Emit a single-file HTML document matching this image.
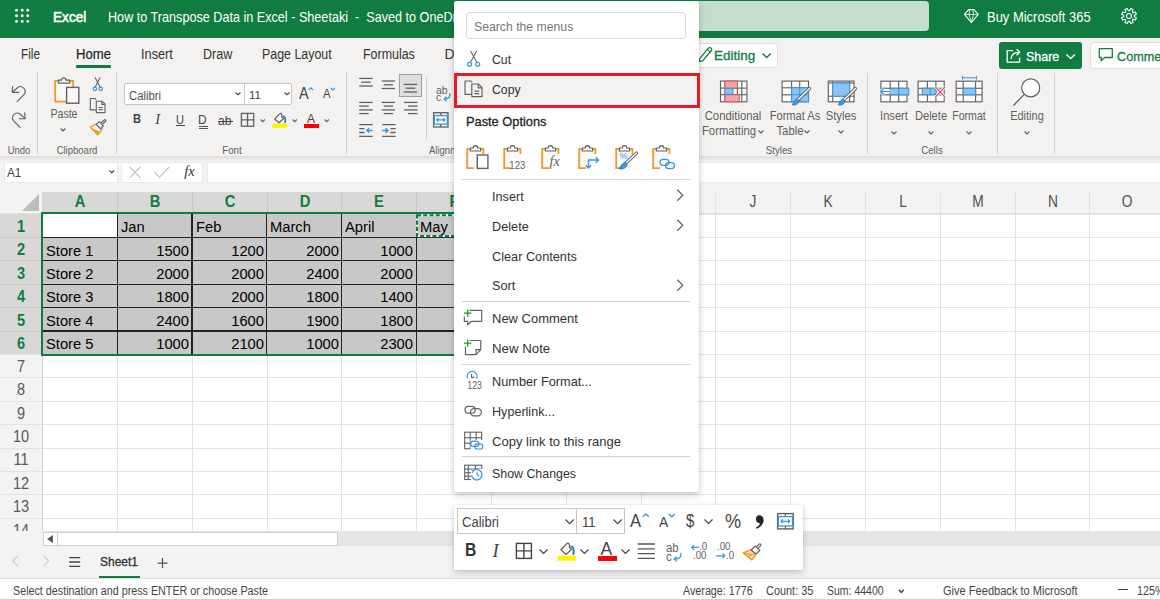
<!DOCTYPE html><html><head><meta charset="utf-8"><style>html,body{margin:0;padding:0;}body{width:1160px;height:600px;overflow:hidden;position:relative;background:#fff;font-family:'Liberation Sans', sans-serif;}</style></head><body><div style="position:absolute;left:0;top:0;width:1160px;height:600px;overflow:hidden"><div style="position:absolute;left:0.00px;top:0.00px;width:1160.00px;height:38.60px;background:#107C41"></div>
<div style="position:absolute;left:0.00px;top:38.00px;width:1160.00px;height:118.00px;background:#F3F2F1"></div>
<div style="position:absolute;left:0.00px;top:155.60px;width:1160.00px;height:6.40px;background:linear-gradient(#DDDDDD,#EFEFEF 70%,#F3F3F3)"></div>
<div style="position:absolute;left:0.00px;top:156.00px;width:1160.00px;height:36.00px;background:#F3F3F3;z-index:-1"></div>
<div style="position:absolute;left:4.00px;top:161.60px;width:113.60px;height:21.80px;background:#fff;border:1px solid #EAEAEA;box-sizing:border-box"></div>
<div style="position:absolute;left:121.20px;top:161.60px;width:81.60px;height:21.80px;background:#fff;border:1px solid #EAEAEA;box-sizing:border-box"></div>
<div style="position:absolute;left:207.40px;top:161.60px;width:960.00px;height:21.80px;background:#fff;border:1px solid #EAEAEA;box-sizing:border-box"></div>
<div style="position:absolute;left:0.00px;top:183.50px;width:1160.00px;height:29.50px;background:#F3F3F3"></div>
<div style="position:absolute;left:0.00px;top:213.00px;width:42.50px;height:318.00px;background:#F3F3F3"></div>
<div style="position:absolute;left:42.50px;top:213.00px;width:1117.50px;height:318.00px;background:#fff"></div>
<div style="position:absolute;left:117.00px;top:192.00px;width:1.00px;height:339.00px;background:#E3E3E3"></div>
<div style="position:absolute;left:191.80px;top:192.00px;width:1.00px;height:339.00px;background:#E3E3E3"></div>
<div style="position:absolute;left:266.60px;top:192.00px;width:1.00px;height:339.00px;background:#E3E3E3"></div>
<div style="position:absolute;left:341.40px;top:192.00px;width:1.00px;height:339.00px;background:#E3E3E3"></div>
<div style="position:absolute;left:416.20px;top:192.00px;width:1.00px;height:339.00px;background:#E3E3E3"></div>
<div style="position:absolute;left:491.00px;top:192.00px;width:1.00px;height:339.00px;background:#E3E3E3"></div>
<div style="position:absolute;left:565.80px;top:192.00px;width:1.00px;height:339.00px;background:#E3E3E3"></div>
<div style="position:absolute;left:640.60px;top:192.00px;width:1.00px;height:339.00px;background:#E3E3E3"></div>
<div style="position:absolute;left:715.40px;top:192.00px;width:1.00px;height:339.00px;background:#E3E3E3"></div>
<div style="position:absolute;left:790.20px;top:192.00px;width:1.00px;height:339.00px;background:#E3E3E3"></div>
<div style="position:absolute;left:865.00px;top:192.00px;width:1.00px;height:339.00px;background:#E3E3E3"></div>
<div style="position:absolute;left:939.80px;top:192.00px;width:1.00px;height:339.00px;background:#E3E3E3"></div>
<div style="position:absolute;left:1014.60px;top:192.00px;width:1.00px;height:339.00px;background:#E3E3E3"></div>
<div style="position:absolute;left:1089.40px;top:192.00px;width:1.00px;height:339.00px;background:#E3E3E3"></div>
<div style="position:absolute;left:1164.20px;top:192.00px;width:1.00px;height:339.00px;background:#E3E3E3"></div>
<div style="position:absolute;left:0.00px;top:213.50px;width:1160.00px;height:1.00px;background:#E3E3E3"></div>
<div style="position:absolute;left:0.00px;top:236.90px;width:1160.00px;height:1.00px;background:#E3E3E3"></div>
<div style="position:absolute;left:0.00px;top:260.30px;width:1160.00px;height:1.00px;background:#E3E3E3"></div>
<div style="position:absolute;left:0.00px;top:283.70px;width:1160.00px;height:1.00px;background:#E3E3E3"></div>
<div style="position:absolute;left:0.00px;top:307.10px;width:1160.00px;height:1.00px;background:#E3E3E3"></div>
<div style="position:absolute;left:0.00px;top:330.50px;width:1160.00px;height:1.00px;background:#E3E3E3"></div>
<div style="position:absolute;left:0.00px;top:353.90px;width:1160.00px;height:1.00px;background:#E3E3E3"></div>
<div style="position:absolute;left:0.00px;top:377.30px;width:1160.00px;height:1.00px;background:#E3E3E3"></div>
<div style="position:absolute;left:0.00px;top:400.70px;width:1160.00px;height:1.00px;background:#E3E3E3"></div>
<div style="position:absolute;left:0.00px;top:424.10px;width:1160.00px;height:1.00px;background:#E3E3E3"></div>
<div style="position:absolute;left:0.00px;top:447.50px;width:1160.00px;height:1.00px;background:#E3E3E3"></div>
<div style="position:absolute;left:0.00px;top:470.90px;width:1160.00px;height:1.00px;background:#E3E3E3"></div>
<div style="position:absolute;left:0.00px;top:494.30px;width:1160.00px;height:1.00px;background:#E3E3E3"></div>
<div style="position:absolute;left:0.00px;top:517.70px;width:1160.00px;height:1.00px;background:#E3E3E3"></div>
<div style="position:absolute;left:42.00px;top:192.00px;width:1.00px;height:339.00px;background:#D4D4D4"></div>
<div style="position:absolute;left:0.00px;top:212.80px;width:1160.00px;height:1.50px;background:#E0E0E0"></div>
<div style="position:absolute;left:42.70px;top:192.00px;width:448.80px;height:20.50px;background:#D9D8D6"></div>
<div style="position:absolute;left:0.00px;top:214.00px;width:42.00px;height:140.40px;background:#D9D8D6"></div>
<div style="position:absolute;left:117.00px;top:192.00px;width:1.00px;height:20.50px;background:#C8C8C8"></div>
<div style="position:absolute;left:191.80px;top:192.00px;width:1.00px;height:20.50px;background:#C8C8C8"></div>
<div style="position:absolute;left:266.60px;top:192.00px;width:1.00px;height:20.50px;background:#C8C8C8"></div>
<div style="position:absolute;left:341.40px;top:192.00px;width:1.00px;height:20.50px;background:#C8C8C8"></div>
<div style="position:absolute;left:416.20px;top:192.00px;width:1.00px;height:20.50px;background:#C8C8C8"></div>
<div style="position:absolute;left:0.00px;top:236.90px;width:42.00px;height:1.00px;background:#C8C8C8"></div>
<div style="position:absolute;left:0.00px;top:260.30px;width:42.00px;height:1.00px;background:#C8C8C8"></div>
<div style="position:absolute;left:0.00px;top:283.70px;width:42.00px;height:1.00px;background:#C8C8C8"></div>
<div style="position:absolute;left:0.00px;top:307.10px;width:42.00px;height:1.00px;background:#C8C8C8"></div>
<div style="position:absolute;left:0.00px;top:330.50px;width:42.00px;height:1.00px;background:#C8C8C8"></div>
<svg style="position:absolute;left:22.00px;top:194.00px;overflow:visible;" width="17" height="17" viewBox="0 0 17 17" fill="none"><path d="M0 17 L17 0 L17 17 Z" fill="#BDBDBD"/></svg>
<div style="position:absolute;left:-219.90px;width:600px;text-align:center;top:194.10px;font:700 16.0px/1 'Liberation Sans', sans-serif;color:#107C41;white-space:nowrap;transform:scaleX(0.92);transform-origin:center 0;">A</div>
<div style="position:absolute;left:-145.10px;width:600px;text-align:center;top:194.10px;font:700 16.0px/1 'Liberation Sans', sans-serif;color:#107C41;white-space:nowrap;transform:scaleX(0.92);transform-origin:center 0;">B</div>
<div style="position:absolute;left:-70.30px;width:600px;text-align:center;top:194.10px;font:700 16.0px/1 'Liberation Sans', sans-serif;color:#107C41;white-space:nowrap;transform:scaleX(0.92);transform-origin:center 0;">C</div>
<div style="position:absolute;left:4.50px;width:600px;text-align:center;top:194.10px;font:700 16.0px/1 'Liberation Sans', sans-serif;color:#107C41;white-space:nowrap;transform:scaleX(0.92);transform-origin:center 0;">D</div>
<div style="position:absolute;left:79.30px;width:600px;text-align:center;top:194.10px;font:700 16.0px/1 'Liberation Sans', sans-serif;color:#107C41;white-space:nowrap;transform:scaleX(0.92);transform-origin:center 0;">E</div>
<div style="position:absolute;left:154.10px;width:600px;text-align:center;top:194.10px;font:700 16.0px/1 'Liberation Sans', sans-serif;color:#107C41;white-space:nowrap;transform:scaleX(0.92);transform-origin:center 0;">F</div>
<div style="position:absolute;left:228.90px;width:600px;text-align:center;top:194.10px;font:400 16.0px/1 'Liberation Sans', sans-serif;color:#505050;white-space:nowrap;transform:scaleX(0.86);transform-origin:center 0;">G</div>
<div style="position:absolute;left:303.70px;width:600px;text-align:center;top:194.10px;font:400 16.0px/1 'Liberation Sans', sans-serif;color:#505050;white-space:nowrap;transform:scaleX(0.86);transform-origin:center 0;">H</div>
<div style="position:absolute;left:378.50px;width:600px;text-align:center;top:194.10px;font:400 16.0px/1 'Liberation Sans', sans-serif;color:#505050;white-space:nowrap;transform:scaleX(0.86);transform-origin:center 0;">I</div>
<div style="position:absolute;left:453.30px;width:600px;text-align:center;top:194.10px;font:400 16.0px/1 'Liberation Sans', sans-serif;color:#505050;white-space:nowrap;transform:scaleX(0.86);transform-origin:center 0;">J</div>
<div style="position:absolute;left:528.10px;width:600px;text-align:center;top:194.10px;font:400 16.0px/1 'Liberation Sans', sans-serif;color:#505050;white-space:nowrap;transform:scaleX(0.86);transform-origin:center 0;">K</div>
<div style="position:absolute;left:602.90px;width:600px;text-align:center;top:194.10px;font:400 16.0px/1 'Liberation Sans', sans-serif;color:#505050;white-space:nowrap;transform:scaleX(0.86);transform-origin:center 0;">L</div>
<div style="position:absolute;left:677.70px;width:600px;text-align:center;top:194.10px;font:400 16.0px/1 'Liberation Sans', sans-serif;color:#505050;white-space:nowrap;transform:scaleX(0.86);transform-origin:center 0;">M</div>
<div style="position:absolute;left:752.50px;width:600px;text-align:center;top:194.10px;font:400 16.0px/1 'Liberation Sans', sans-serif;color:#505050;white-space:nowrap;transform:scaleX(0.86);transform-origin:center 0;">N</div>
<div style="position:absolute;left:827.30px;width:600px;text-align:center;top:194.10px;font:400 16.0px/1 'Liberation Sans', sans-serif;color:#505050;white-space:nowrap;transform:scaleX(0.86);transform-origin:center 0;">O</div>
<div style="position:absolute;left:-279.40px;width:600px;text-align:center;top:218.03px;font:700 16.2px/1 'Liberation Sans', sans-serif;color:#107C41;white-space:nowrap;transform:scaleX(0.9);transform-origin:center 0;">1</div>
<div style="position:absolute;left:-279.40px;width:600px;text-align:center;top:241.43px;font:700 16.2px/1 'Liberation Sans', sans-serif;color:#107C41;white-space:nowrap;transform:scaleX(0.9);transform-origin:center 0;">2</div>
<div style="position:absolute;left:-279.40px;width:600px;text-align:center;top:264.83px;font:700 16.2px/1 'Liberation Sans', sans-serif;color:#107C41;white-space:nowrap;transform:scaleX(0.9);transform-origin:center 0;">3</div>
<div style="position:absolute;left:-279.40px;width:600px;text-align:center;top:288.23px;font:700 16.2px/1 'Liberation Sans', sans-serif;color:#107C41;white-space:nowrap;transform:scaleX(0.9);transform-origin:center 0;">4</div>
<div style="position:absolute;left:-279.40px;width:600px;text-align:center;top:311.63px;font:700 16.2px/1 'Liberation Sans', sans-serif;color:#107C41;white-space:nowrap;transform:scaleX(0.9);transform-origin:center 0;">5</div>
<div style="position:absolute;left:-279.40px;width:600px;text-align:center;top:335.03px;font:700 16.2px/1 'Liberation Sans', sans-serif;color:#107C41;white-space:nowrap;transform:scaleX(0.9);transform-origin:center 0;">6</div>
<div style="position:absolute;left:-279.50px;width:600px;text-align:center;top:357.83px;font:400 16.2px/1 'Liberation Sans', sans-serif;color:#595959;white-space:nowrap;transform:scaleX(0.9);transform-origin:center 0;">7</div>
<div style="position:absolute;left:-279.50px;width:600px;text-align:center;top:381.23px;font:400 16.2px/1 'Liberation Sans', sans-serif;color:#595959;white-space:nowrap;transform:scaleX(0.9);transform-origin:center 0;">8</div>
<div style="position:absolute;left:-279.50px;width:600px;text-align:center;top:404.63px;font:400 16.2px/1 'Liberation Sans', sans-serif;color:#595959;white-space:nowrap;transform:scaleX(0.9);transform-origin:center 0;">9</div>
<div style="position:absolute;left:-279.50px;width:600px;text-align:center;top:428.03px;font:400 16.2px/1 'Liberation Sans', sans-serif;color:#595959;white-space:nowrap;transform:scaleX(0.9);transform-origin:center 0;">10</div>
<div style="position:absolute;left:-279.50px;width:600px;text-align:center;top:451.43px;font:400 16.2px/1 'Liberation Sans', sans-serif;color:#595959;white-space:nowrap;transform:scaleX(0.9);transform-origin:center 0;">11</div>
<div style="position:absolute;left:-279.50px;width:600px;text-align:center;top:474.83px;font:400 16.2px/1 'Liberation Sans', sans-serif;color:#595959;white-space:nowrap;transform:scaleX(0.9);transform-origin:center 0;">12</div>
<div style="position:absolute;left:-279.50px;width:600px;text-align:center;top:498.23px;font:400 16.2px/1 'Liberation Sans', sans-serif;color:#595959;white-space:nowrap;transform:scaleX(0.9);transform-origin:center 0;">13</div>
<div style="position:absolute;left:-279.50px;width:600px;text-align:center;top:521.63px;font:400 16.2px/1 'Liberation Sans', sans-serif;color:#595959;white-space:nowrap;transform:scaleX(0.9);transform-origin:center 0;">14</div>
<div style="position:absolute;left:42.70px;top:214.00px;width:523.60px;height:140.40px;background:#C8C8C8"></div>
<div style="position:absolute;left:42.70px;top:214.00px;width:74.80px;height:23.40px;background:#fff"></div>
<div style="position:absolute;left:116.60px;top:214.00px;width:1.30px;height:140.40px;background:#222"></div>
<div style="position:absolute;left:191.40px;top:214.00px;width:1.30px;height:140.40px;background:#222"></div>
<div style="position:absolute;left:266.20px;top:214.00px;width:1.30px;height:140.40px;background:#222"></div>
<div style="position:absolute;left:341.00px;top:214.00px;width:1.30px;height:140.40px;background:#222"></div>
<div style="position:absolute;left:415.80px;top:214.00px;width:1.30px;height:140.40px;background:#222"></div>
<div style="position:absolute;left:490.60px;top:214.00px;width:1.30px;height:140.40px;background:#222"></div>
<div style="position:absolute;left:42.70px;top:236.75px;width:523.60px;height:1.30px;background:#222"></div>
<div style="position:absolute;left:42.70px;top:260.15px;width:523.60px;height:1.30px;background:#222"></div>
<div style="position:absolute;left:42.70px;top:283.55px;width:523.60px;height:1.30px;background:#222"></div>
<div style="position:absolute;left:42.70px;top:306.95px;width:523.60px;height:1.30px;background:#222"></div>
<div style="position:absolute;left:42.70px;top:330.35px;width:523.60px;height:1.30px;background:#222"></div>
<div style="position:absolute;left:41.00px;top:212.20px;width:533.60px;height:1.90px;background:#107C41"></div>
<div style="position:absolute;left:41.00px;top:212.20px;width:2.00px;height:143.20px;background:#107C41"></div>
<div style="position:absolute;left:41.00px;top:353.60px;width:533.60px;height:2.00px;background:#107C41"></div>
<svg style="position:absolute;left:415.70px;top:214.00px;overflow:visible;" width="60" height="23.4" viewBox="0 0 60 23.4" fill="none"><rect x="1" y="1.3" width="80" height="20.799999999999997" stroke="#fff" stroke-width="2"/><rect x="1" y="1.3" width="80" height="20.799999999999997" stroke="#107C41" stroke-width="2" stroke-dasharray="4.2 2"/></svg>
<div style="position:absolute;left:120.80px;top:219.12px;font:400 15.5px/1 'Liberation Sans', sans-serif;color:#000;white-space:nowrap;transform:scaleX(0.95);transform-origin:left 0;">Jan</div>
<div style="position:absolute;left:195.60px;top:219.12px;font:400 15.5px/1 'Liberation Sans', sans-serif;color:#000;white-space:nowrap;transform:scaleX(0.95);transform-origin:left 0;">Feb</div>
<div style="position:absolute;left:270.40px;top:219.12px;font:400 15.5px/1 'Liberation Sans', sans-serif;color:#000;white-space:nowrap;transform:scaleX(0.95);transform-origin:left 0;">March</div>
<div style="position:absolute;left:345.20px;top:219.12px;font:400 15.5px/1 'Liberation Sans', sans-serif;color:#000;white-space:nowrap;transform:scaleX(0.95);transform-origin:left 0;">April</div>
<div style="position:absolute;left:420.00px;top:219.12px;font:400 15.5px/1 'Liberation Sans', sans-serif;color:#000;white-space:nowrap;transform:scaleX(0.95);transform-origin:left 0;">May</div>
<div style="position:absolute;left:46.00px;top:242.53px;font:400 15.5px/1 'Liberation Sans', sans-serif;color:#000;white-space:nowrap;transform:scaleX(0.95);transform-origin:left 0;">Store 1</div>
<div style="position:absolute;left:-411.00px;width:600px;text-align:right;top:242.53px;font:400 15.5px/1 'Liberation Sans', sans-serif;color:#000;white-space:nowrap;transform:scaleX(0.95);transform-origin:right 0;">1500</div>
<div style="position:absolute;left:-336.20px;width:600px;text-align:right;top:242.53px;font:400 15.5px/1 'Liberation Sans', sans-serif;color:#000;white-space:nowrap;transform:scaleX(0.95);transform-origin:right 0;">1200</div>
<div style="position:absolute;left:-261.40px;width:600px;text-align:right;top:242.53px;font:400 15.5px/1 'Liberation Sans', sans-serif;color:#000;white-space:nowrap;transform:scaleX(0.95);transform-origin:right 0;">2000</div>
<div style="position:absolute;left:-186.60px;width:600px;text-align:right;top:242.53px;font:400 15.5px/1 'Liberation Sans', sans-serif;color:#000;white-space:nowrap;transform:scaleX(0.95);transform-origin:right 0;">1000</div>
<div style="position:absolute;left:46.00px;top:265.93px;font:400 15.5px/1 'Liberation Sans', sans-serif;color:#000;white-space:nowrap;transform:scaleX(0.95);transform-origin:left 0;">Store 2</div>
<div style="position:absolute;left:-411.00px;width:600px;text-align:right;top:265.93px;font:400 15.5px/1 'Liberation Sans', sans-serif;color:#000;white-space:nowrap;transform:scaleX(0.95);transform-origin:right 0;">2000</div>
<div style="position:absolute;left:-336.20px;width:600px;text-align:right;top:265.93px;font:400 15.5px/1 'Liberation Sans', sans-serif;color:#000;white-space:nowrap;transform:scaleX(0.95);transform-origin:right 0;">2000</div>
<div style="position:absolute;left:-261.40px;width:600px;text-align:right;top:265.93px;font:400 15.5px/1 'Liberation Sans', sans-serif;color:#000;white-space:nowrap;transform:scaleX(0.95);transform-origin:right 0;">2400</div>
<div style="position:absolute;left:-186.60px;width:600px;text-align:right;top:265.93px;font:400 15.5px/1 'Liberation Sans', sans-serif;color:#000;white-space:nowrap;transform:scaleX(0.95);transform-origin:right 0;">2000</div>
<div style="position:absolute;left:46.00px;top:289.32px;font:400 15.5px/1 'Liberation Sans', sans-serif;color:#000;white-space:nowrap;transform:scaleX(0.95);transform-origin:left 0;">Store 3</div>
<div style="position:absolute;left:-411.00px;width:600px;text-align:right;top:289.32px;font:400 15.5px/1 'Liberation Sans', sans-serif;color:#000;white-space:nowrap;transform:scaleX(0.95);transform-origin:right 0;">1800</div>
<div style="position:absolute;left:-336.20px;width:600px;text-align:right;top:289.32px;font:400 15.5px/1 'Liberation Sans', sans-serif;color:#000;white-space:nowrap;transform:scaleX(0.95);transform-origin:right 0;">2000</div>
<div style="position:absolute;left:-261.40px;width:600px;text-align:right;top:289.32px;font:400 15.5px/1 'Liberation Sans', sans-serif;color:#000;white-space:nowrap;transform:scaleX(0.95);transform-origin:right 0;">1800</div>
<div style="position:absolute;left:-186.60px;width:600px;text-align:right;top:289.32px;font:400 15.5px/1 'Liberation Sans', sans-serif;color:#000;white-space:nowrap;transform:scaleX(0.95);transform-origin:right 0;">1400</div>
<div style="position:absolute;left:46.00px;top:312.73px;font:400 15.5px/1 'Liberation Sans', sans-serif;color:#000;white-space:nowrap;transform:scaleX(0.95);transform-origin:left 0;">Store 4</div>
<div style="position:absolute;left:-411.00px;width:600px;text-align:right;top:312.73px;font:400 15.5px/1 'Liberation Sans', sans-serif;color:#000;white-space:nowrap;transform:scaleX(0.95);transform-origin:right 0;">2400</div>
<div style="position:absolute;left:-336.20px;width:600px;text-align:right;top:312.73px;font:400 15.5px/1 'Liberation Sans', sans-serif;color:#000;white-space:nowrap;transform:scaleX(0.95);transform-origin:right 0;">1600</div>
<div style="position:absolute;left:-261.40px;width:600px;text-align:right;top:312.73px;font:400 15.5px/1 'Liberation Sans', sans-serif;color:#000;white-space:nowrap;transform:scaleX(0.95);transform-origin:right 0;">1900</div>
<div style="position:absolute;left:-186.60px;width:600px;text-align:right;top:312.73px;font:400 15.5px/1 'Liberation Sans', sans-serif;color:#000;white-space:nowrap;transform:scaleX(0.95);transform-origin:right 0;">1800</div>
<div style="position:absolute;left:46.00px;top:336.12px;font:400 15.5px/1 'Liberation Sans', sans-serif;color:#000;white-space:nowrap;transform:scaleX(0.95);transform-origin:left 0;">Store 5</div>
<div style="position:absolute;left:-411.00px;width:600px;text-align:right;top:336.12px;font:400 15.5px/1 'Liberation Sans', sans-serif;color:#000;white-space:nowrap;transform:scaleX(0.95);transform-origin:right 0;">1000</div>
<div style="position:absolute;left:-336.20px;width:600px;text-align:right;top:336.12px;font:400 15.5px/1 'Liberation Sans', sans-serif;color:#000;white-space:nowrap;transform:scaleX(0.95);transform-origin:right 0;">2100</div>
<div style="position:absolute;left:-261.40px;width:600px;text-align:right;top:336.12px;font:400 15.5px/1 'Liberation Sans', sans-serif;color:#000;white-space:nowrap;transform:scaleX(0.95);transform-origin:right 0;">1000</div>
<div style="position:absolute;left:-186.60px;width:600px;text-align:right;top:336.12px;font:400 15.5px/1 'Liberation Sans', sans-serif;color:#000;white-space:nowrap;transform:scaleX(0.95);transform-origin:right 0;">2300</div>
<div style="position:absolute;left:0.00px;top:531.00px;width:1160.00px;height:15.00px;background:#F3F3F3"></div>
<div style="position:absolute;left:43.00px;top:531.00px;width:1117.00px;height:15.00px;background:#E6E6E6"></div>
<div style="position:absolute;left:43.00px;top:531.50px;width:295.00px;height:14.00px;background:#fff;border:1px solid #D0D0D0;box-sizing:border-box"></div>
<div style="position:absolute;left:43.00px;top:531.50px;width:14.50px;height:14.00px;background:#fff;border:1px solid #D0D0D0;box-sizing:border-box"></div>
<svg style="position:absolute;left:47.00px;top:535.00px;overflow:visible;" width="6" height="8" viewBox="0 0 6 8" fill="none"><path d="M6 0 L0 4 L6 8 Z" fill="#555"/></svg>
<div style="position:absolute;left:0.00px;top:546.00px;width:1160.00px;height:32.50px;background:#F3F3F3"></div>
<svg style="position:absolute;left:14.80px;top:9.00px;overflow:visible;" width="15" height="15" viewBox="0 0 15 15" fill="none"><circle cx="1.55" cy="1.2" r="1.45" fill="#fff"/><circle cx="1.55" cy="6.8" r="1.45" fill="#fff"/><circle cx="1.55" cy="12.399999999999999" r="1.45" fill="#fff"/><circle cx="7.1499999999999995" cy="1.2" r="1.45" fill="#fff"/><circle cx="7.1499999999999995" cy="6.8" r="1.45" fill="#fff"/><circle cx="7.1499999999999995" cy="12.399999999999999" r="1.45" fill="#fff"/><circle cx="12.75" cy="1.2" r="1.45" fill="#fff"/><circle cx="12.75" cy="6.8" r="1.45" fill="#fff"/><circle cx="12.75" cy="12.399999999999999" r="1.45" fill="#fff"/></svg>
<div style="position:absolute;left:52.50px;top:9.92px;font:400 14.8px/1 'Liberation Sans', sans-serif;color:#fff;white-space:nowrap;transform:scaleX(0.92);transform-origin:left 0;-webkit-text-stroke:0.55px #fff">Excel</div>
<div style="position:absolute;left:108.30px;top:10.43px;font:400 14.2px/1 'Liberation Sans', sans-serif;color:#fff;white-space:nowrap;transform:scaleX(0.89);transform-origin:left 0;">How to Transpose Data in Excel - Sheetaki &nbsp;-&nbsp; Saved to OneDrive</div>
<div style="position:absolute;left:470.00px;top:1.25px;width:459.30px;height:29.50px;background:#C5DCCE;border-radius:4px"></div>
<svg style="position:absolute;left:964.40px;top:9.00px;overflow:visible;" width="15" height="15" viewBox="0 0 15 15" fill="none"><path d="M4.6 0.6 H10 L14.2 5.4 L7.3 13.6 L0.5 5.4 Z" stroke="#fff" stroke-width="1.05" stroke-linejoin="round"/><path d="M0.5 5.4 H14.2 M5.6 0.6 L5.1 5.4 L7.3 13.6 L9.5 5.4 L9 0.6" stroke="#fff" stroke-opacity="0.85" stroke-width="0.9" stroke-linejoin="round"/></svg>
<div style="position:absolute;left:987.00px;top:10.13px;font:400 14.2px/1 'Liberation Sans', sans-serif;color:#fff;white-space:nowrap;transform:scaleX(0.913);transform-origin:left 0;">Buy Microsoft 365</div>
<svg style="position:absolute;left:1121.40px;top:8.10px;overflow:visible;" width="16" height="16" viewBox="0 0 16 16" fill="none"><path d="M15.41 9.68 L14.43 12.05 L12.18 11.26 L11.26 12.18 L12.05 14.43 L9.68 15.41 L8.65 13.26 L7.35 13.26 L6.32 15.41 L3.95 14.43 L4.74 12.18 L3.82 11.26 L1.57 12.05 L0.59 9.68 L2.74 8.65 L2.74 7.35 L0.59 6.32 L1.57 3.95 L3.82 4.74 L4.74 3.82 L3.95 1.57 L6.32 0.59 L7.35 2.74 L8.65 2.74 L9.68 0.59 L12.05 1.57 L11.26 3.82 L12.18 4.74 L14.43 3.95 L15.41 6.32 L13.26 7.35 L13.26 8.65 Z" stroke="#fff" stroke-width="1.1" stroke-linejoin="round"/><circle cx="8" cy="8" r="2.5" stroke="#fff" stroke-width="1.1"/></svg>
<div style="position:absolute;left:21.00px;top:46.70px;font:400 14.0px/1 'Liberation Sans', sans-serif;color:#323130;white-space:nowrap;transform:scaleX(0.8422919206472349);transform-origin:left 0;">File</div>
<div style="position:absolute;left:76.00px;top:46.70px;font:400 14.0px/1 'Liberation Sans', sans-serif;color:#201F1E;white-space:nowrap;transform:scaleX(0.9372620233143929);transform-origin:left 0;-webkit-text-stroke:0.2px #201F1E">Home</div>
<div style="position:absolute;left:140.80px;top:46.70px;font:400 14.0px/1 'Liberation Sans', sans-serif;color:#323130;white-space:nowrap;transform:scaleX(0.9111438389788905);transform-origin:left 0;">Insert</div>
<div style="position:absolute;left:202.50px;top:46.70px;font:400 14.0px/1 'Liberation Sans', sans-serif;color:#323130;white-space:nowrap;transform:scaleX(0.8968987353880886);transform-origin:left 0;">Draw</div>
<div style="position:absolute;left:262.30px;top:46.70px;font:400 14.0px/1 'Liberation Sans', sans-serif;color:#323130;white-space:nowrap;transform:scaleX(0.8866062981483985);transform-origin:left 0;">Page Layout</div>
<div style="position:absolute;left:362.70px;top:46.70px;font:400 14.0px/1 'Liberation Sans', sans-serif;color:#323130;white-space:nowrap;transform:scaleX(0.8878890138732658);transform-origin:left 0;">Formulas</div>
<div style="position:absolute;left:444.40px;top:46.70px;font:400 14.0px/1 'Liberation Sans', sans-serif;color:#323130;white-space:nowrap;transform:scaleX(1.0);transform-origin:left 0;">Data</div>
<div style="position:absolute;left:76.00px;top:65.00px;width:35.00px;height:3.00px;background:#107C41;border-radius:1px"></div>
<div style="position:absolute;left:37.00px;top:72.00px;width:1.00px;height:82.00px;background:#D2D0CE"></div>
<div style="position:absolute;left:115.50px;top:72.00px;width:1.00px;height:82.00px;background:#D2D0CE"></div>
<div style="position:absolute;left:346.20px;top:72.00px;width:1.00px;height:82.00px;background:#D2D0CE"></div>
<div style="position:absolute;left:425.50px;top:76.70px;width:1.00px;height:63.80px;background:#D2D0CE"></div>
<div style="position:absolute;left:867.00px;top:72.50px;width:1.00px;height:81.30px;background:#D2D0CE"></div>
<div style="position:absolute;left:996.50px;top:72.50px;width:1.00px;height:81.30px;background:#D2D0CE"></div>
<div style="position:absolute;left:1053.50px;top:72.50px;width:1.00px;height:81.30px;background:#D2D0CE"></div>
<svg style="position:absolute;left:5.00px;top:75.00px;overflow:visible;" width="30" height="60" viewBox="0 0 30 60" fill="none"><g stroke="#616161" stroke-width="1.15" stroke-linecap="round" stroke-linejoin="round"><path d="M7.6 11.6 L7.2 17.4 L13.8 17.4"/><path d="M7.5 17 L12.5 12.7 A4.7 4.7 0 0 1 19.1 19.3 L12.2 26.6"/><path d="M19.7 37.8 L20.1 43.7 L14.3 43.7"/><path d="M20 43.4 L15.2 39.2 A4.7 4.7 0 0 0 8.6 45.8 L15.1 52.4"/></g></svg>
<div style="position:absolute;left:-281.00px;width:600px;text-align:center;top:145.19px;font:400 10.6px/1 'Liberation Sans', sans-serif;color:#605E5C;white-space:nowrap;transform:scaleX(0.892);transform-origin:center 0;">Undo</div>
<svg style="position:absolute;left:50.00px;top:74.00px;overflow:visible;" width="32" height="32" viewBox="0 0 32 32" fill="none"><rect x="5.2" y="6.8" width="18" height="20.8" fill="#FAF9F8" stroke="#ED9A2B" stroke-width="1.8"/><path d="M8.3 9.2 V6.2 H11.5 C11.5 3.2, 16 3.2, 16 6.2 H19.8 V9.2 Z" fill="#F3F2F1" stroke="#616161" stroke-width="1.2" stroke-linejoin="round"/><rect x="16.6" y="13.4" width="12.2" height="15.8" fill="#FAF9F8" stroke="#616161" stroke-width="1.4"/></svg>
<div style="position:absolute;left:-235.80px;width:600px;text-align:center;top:107.08px;font:400 13.2px/1 'Liberation Sans', sans-serif;color:#605E5C;white-space:nowrap;transform:scaleX(0.8);transform-origin:center 0;">Paste</div>
<svg style="position:absolute;left:60.40px;top:127.85px;overflow:visible;" width="6" height="3.5" viewBox="0 0 6 3.5" fill="none"><path d="M0.5 0.5 L3.0 3.0 L5.5 0.5" stroke="#616161" stroke-width="1.2"/></svg>
<svg style="position:absolute;left:90.00px;top:75.00px;overflow:visible;" width="16" height="16" viewBox="0 0 16 16" fill="none"><path d="M5 2.2 L10.2 12.3 M10.3 2.2 L5.1 12.3" stroke="#616161" stroke-width="1.05"/><circle cx="4.9" cy="13.8" r="1.75" stroke="#3A96DD" stroke-width="1.2" fill="#F3F2F1"/><circle cx="10.7" cy="13.8" r="1.75" stroke="#3A96DD" stroke-width="1.2" fill="#F3F2F1"/></svg>
<svg style="position:absolute;left:88.00px;top:96.00px;overflow:visible;" width="20" height="20" viewBox="0 0 20 20" fill="none"><g stroke="#616161" stroke-width="1.1" stroke-linejoin="round"><path d="M7.9 13.9 H2.3 V2.5 H7.2 L8.2 3.7"/><path d="M8.3 5.2 H14 L17 8.2 V16.6 H8.3 Z" fill="#F3F2F1"/><path d="M13.8 5.2 V8.4 H17"/><path d="M10.6 11.5 H14.7 M10.6 13.6 H14.7"/></g></svg>
<svg style="position:absolute;left:88.00px;top:118.00px;overflow:visible;" width="20" height="20" viewBox="0 0 20 20" fill="none"><path d="M2.3 9 L9.8 16.9 L14.2 11.2 L8.4 5.8 Z" fill="#FDF6EE" stroke="#ED9A2B" stroke-width="1.4" stroke-linejoin="round"/><path d="M3.2 9.9 L9.8 16.2 L11.6 13.6 Z" fill="#ED9A2B"/><path d="M8.3 6.6 L11.2 3.7 L15.4 7.9 L12.6 10.8 Z" fill="#F3F2F1" stroke="#616161" stroke-width="1.2" stroke-linejoin="round"/><path d="M12.8 5.3 L16.3 1.9 C17 1.3, 18.3 2.4, 17.7 3.2 L14.1 6.6" fill="#F3F2F1" stroke="#616161" stroke-width="1.2" stroke-linejoin="round"/></svg>
<div style="position:absolute;left:-222.70px;width:600px;text-align:center;top:145.19px;font:400 10.6px/1 'Liberation Sans', sans-serif;color:#605E5C;white-space:nowrap;transform:scaleX(0.898);transform-origin:center 0;">Clipboard</div>
<div style="position:absolute;left:124.30px;top:82.90px;width:167.90px;height:22.20px;background:#fff;border:1px solid #C8C6C4;border-radius:2px;box-sizing:border-box"></div>
<div style="position:absolute;left:243.60px;top:82.90px;width:1.00px;height:22.20px;background:#C8C6C4"></div>
<div style="position:absolute;left:129.30px;top:89.50px;font:400 12.0px/1 'Liberation Sans', sans-serif;color:#505050;white-space:nowrap;transform:scaleX(0.94);transform-origin:left 0;">Calibri</div>
<svg style="position:absolute;left:235.30px;top:92.10px;overflow:visible;" width="6" height="3.2" viewBox="0 0 6 3.2" fill="none"><path d="M0.5 0.5 L3.0 2.7 L5.5 0.5" stroke="#444" stroke-width="1.2"/></svg>
<div style="position:absolute;left:249.00px;top:90.12px;font:400 11.5px/1 'Liberation Sans', sans-serif;color:#444;white-space:nowrap;">11</div>
<svg style="position:absolute;left:283.90px;top:92.10px;overflow:visible;" width="6" height="3.2" viewBox="0 0 6 3.2" fill="none"><path d="M0.5 0.5 L3.0 2.7 L5.5 0.5" stroke="#444" stroke-width="1.2"/></svg>
<div style="position:absolute;left:298.60px;top:84.93px;font:400 16.2px/1 'Liberation Sans', sans-serif;color:#444;white-space:nowrap;transform:scaleX(0.9);transform-origin:left 0;">A</div>
<svg style="position:absolute;left:307.50px;top:87.00px;overflow:visible;" width="6" height="4" viewBox="0 0 6 4" fill="none"><path d="M0.6 3.2 L2.8 0.9 L5 3.2" stroke="#3A96DD" stroke-width="1.2"/></svg>
<div style="position:absolute;left:323.00px;top:88.49px;font:400 12.6px/1 'Liberation Sans', sans-serif;color:#444;white-space:nowrap;transform:scaleX(0.9);transform-origin:left 0;">A</div>
<svg style="position:absolute;left:330.40px;top:87.00px;overflow:visible;" width="6" height="4" viewBox="0 0 6 4" fill="none"><path d="M0.6 0.9 L2.8 3.2 L5 0.9" stroke="#3A96DD" stroke-width="1.2"/></svg>
<div style="position:absolute;left:132.60px;top:113.19px;font:700 12.6px/1 'Liberation Sans', sans-serif;color:#444;white-space:nowrap;transform:scaleX(0.88);transform-origin:left 0;">B</div>
<div style="position:absolute;left:155.20px;top:111.67px;font:400 14.5px/1 'Liberation Sans', sans-serif;color:#444;white-space:nowrap;font-family:'Liberation Serif',serif;font-style:italic">I</div>
<div style="position:absolute;left:176.00px;top:113.69px;font:400 12.6px/1 'Liberation Sans', sans-serif;color:#444;white-space:nowrap;transform:scaleX(0.88);transform-origin:left 0;">U</div>
<div style="position:absolute;left:176.20px;top:125.00px;width:8.50px;height:1.10px;background:#444"></div>
<div style="position:absolute;left:198.40px;top:113.69px;font:400 12.6px/1 'Liberation Sans', sans-serif;color:#444;white-space:nowrap;transform:scaleX(0.95);transform-origin:left 0;">D</div>
<div style="position:absolute;left:198.60px;top:125.60px;width:9.40px;height:0.85px;background:#555"></div>
<div style="position:absolute;left:198.60px;top:127.50px;width:9.40px;height:0.85px;background:#555"></div>
<div style="position:absolute;left:218.20px;top:113.74px;font:400 13.6px/1 'Liberation Sans', sans-serif;color:#444;white-space:nowrap;transform:scaleX(0.88);transform-origin:left 0;">ab</div>
<div style="position:absolute;left:217.80px;top:121.10px;width:15.50px;height:1.00px;background:#444"></div>
<svg style="position:absolute;left:240.00px;top:112.00px;overflow:visible;" width="16" height="16" viewBox="0 0 16 16" fill="none"><rect x="1.4" y="1.4" width="12.3" height="12.8" stroke="#616161" stroke-width="1.3"/><path d="M7.55 1.4 V14.2 M1.4 7.8 H13.7" stroke="#616161" stroke-width="1.3"/></svg>
<svg style="position:absolute;left:259.90px;top:118.80px;overflow:visible;" width="5.4" height="3.2" viewBox="0 0 5.4 3.2" fill="none"><path d="M0.5 0.5 L2.7 2.7 L4.9 0.5" stroke="#616161" stroke-width="1.1"/></svg>
<svg style="position:absolute;left:271.00px;top:111.00px;overflow:visible;" width="18" height="18" viewBox="0 0 18 18" fill="none"><path d="M3.8 8 L8.5 3.1 C9.1 2.2, 10.3 2.2, 10.6 3.3 L10.9 6.3 L12.6 7.5 L8 11.8 Z" stroke="#616161" stroke-width="1.2" stroke-linejoin="round" fill="#fff"/><path d="M12.3 5.4 C14 5.2, 14.6 7.5, 14.2 11.4" stroke="#2B79C2" stroke-width="1.7" stroke-linecap="round"/><rect x="1.2" y="12.8" width="15.1" height="4.1" fill="#FFF200"/></svg>
<svg style="position:absolute;left:291.80px;top:118.80px;overflow:visible;" width="5.4" height="3.2" viewBox="0 0 5.4 3.2" fill="none"><path d="M0.5 0.5 L2.7 2.7 L4.9 0.5" stroke="#616161" stroke-width="1.1"/></svg>
<div style="position:absolute;left:307.00px;top:112.34px;font:400 13.6px/1 'Liberation Sans', sans-serif;color:#444;white-space:nowrap;transform:scaleX(0.88);transform-origin:left 0;">A</div>
<div style="position:absolute;left:304.00px;top:123.80px;width:15.10px;height:4.10px;background:#F00"></div>
<svg style="position:absolute;left:323.50px;top:118.80px;overflow:visible;" width="5.4" height="3.2" viewBox="0 0 5.4 3.2" fill="none"><path d="M0.5 0.5 L2.7 2.7 L4.9 0.5" stroke="#616161" stroke-width="1.1"/></svg>
<div style="position:absolute;left:-68.00px;width:600px;text-align:center;top:145.19px;font:400 10.6px/1 'Liberation Sans', sans-serif;color:#605E5C;white-space:nowrap;transform:scaleX(0.913);transform-origin:center 0;">Font</div>
<svg style="position:absolute;left:0.00px;top:0.00px;overflow:visible;" width="1" height="1" viewBox="0 0 1 1" fill="none"><path d="M359.20 78.40 H372.70" stroke="#616161" stroke-width="1.3"/><path d="M361.20 82.20 H370.70" stroke="#616161" stroke-width="1.3"/><path d="M359.20 86.00 H372.70" stroke="#616161" stroke-width="1.3"/></svg>
<svg style="position:absolute;left:0.00px;top:0.00px;overflow:visible;" width="1" height="1" viewBox="0 0 1 1" fill="none"><path d="M381.70 81.00 H395.00" stroke="#616161" stroke-width="1.3"/><path d="M383.70 84.80 H393.00" stroke="#616161" stroke-width="1.3"/><path d="M381.70 88.50 H395.00" stroke="#616161" stroke-width="1.3"/></svg>
<div style="position:absolute;left:399.20px;top:74.20px;width:22.50px;height:22.50px;background:#E1DFDD;border:1px solid #A19F9D;box-sizing:border-box"></div>
<svg style="position:absolute;left:0.00px;top:0.00px;overflow:visible;" width="1" height="1" viewBox="0 0 1 1" fill="none"><path d="M403.70 84.40 H417.20" stroke="#616161" stroke-width="1.3"/><path d="M405.70 88.20 H415.20" stroke="#616161" stroke-width="1.3"/><path d="M403.70 92.00 H417.20" stroke="#616161" stroke-width="1.3"/></svg>
<svg style="position:absolute;left:0.00px;top:0.00px;overflow:visible;" width="1" height="1" viewBox="0 0 1 1" fill="none"><path d="M359.20 102.40 H372.70" stroke="#616161" stroke-width="1.3"/><path d="M359.20 106.10 H368.70" stroke="#616161" stroke-width="1.3"/><path d="M359.20 109.90 H372.70" stroke="#616161" stroke-width="1.3"/><path d="M359.20 113.60 H368.70" stroke="#616161" stroke-width="1.3"/></svg>
<svg style="position:absolute;left:0.00px;top:0.00px;overflow:visible;" width="1" height="1" viewBox="0 0 1 1" fill="none"><path d="M381.70 102.40 H395.00" stroke="#616161" stroke-width="1.3"/><path d="M383.70 106.10 H393.00" stroke="#616161" stroke-width="1.3"/><path d="M381.70 109.90 H395.00" stroke="#616161" stroke-width="1.3"/><path d="M383.70 113.60 H393.00" stroke="#616161" stroke-width="1.3"/></svg>
<svg style="position:absolute;left:0.00px;top:0.00px;overflow:visible;" width="1" height="1" viewBox="0 0 1 1" fill="none"><path d="M404.00 102.40 H417.50" stroke="#616161" stroke-width="1.3"/><path d="M408.00 106.10 H417.50" stroke="#616161" stroke-width="1.3"/><path d="M404.00 109.90 H417.50" stroke="#616161" stroke-width="1.3"/><path d="M408.00 113.60 H417.50" stroke="#616161" stroke-width="1.3"/></svg>
<svg style="position:absolute;left:358.00px;top:123.00px;overflow:visible;" width="18" height="16" viewBox="0 0 18 16" fill="none"><g stroke="#616161" stroke-width="1.3"><path d="M1.2 1.6 H14.7 M1.2 13.4 H14.7 M1.2 5.6 H6.5 M1.2 9.5 H6.5"/></g><path d="M14.5 7.5 H8.8 M11.2 5.2 L8.8 7.5 L11.2 9.8" stroke="#3A96DD" stroke-width="1.4"/></svg>
<svg style="position:absolute;left:380.50px;top:123.00px;overflow:visible;" width="18" height="16" viewBox="0 0 18 16" fill="none"><g stroke="#616161" stroke-width="1.3"><path d="M1.2 1.6 H14.7 M1.2 13.4 H14.7 M9.4 5.6 H14.7 M9.4 9.5 H14.7"/></g><path d="M1.2 7.5 H7 M4.6 5.2 L7 7.5 L4.6 9.8" stroke="#3A96DD" stroke-width="1.4"/></svg>
<div style="position:absolute;left:436.00px;top:84.85px;font:400 11.0px/1 'Liberation Sans', sans-serif;color:#616161;white-space:nowrap;transform:scaleX(0.95);transform-origin:left 0;">ab</div>
<div style="position:absolute;left:436.00px;top:91.85px;font:400 11.0px/1 'Liberation Sans', sans-serif;color:#616161;white-space:nowrap;transform:scaleX(0.95);transform-origin:left 0;">c</div>
<svg style="position:absolute;left:442.00px;top:92.00px;overflow:visible;" width="10" height="10" viewBox="0 0 10 10" fill="none"><path d="M7.8 1 C8.5 5, 7 7, 2.2 7 M4.5 4.6 L2.2 7 L4.5 9.2" stroke="#3A96DD" stroke-width="1.3"/></svg>
<svg style="position:absolute;left:432.00px;top:111.00px;overflow:visible;" width="18" height="18" viewBox="0 0 18 18" fill="none"><rect x="1.6" y="1.7" width="14.4" height="14.3" stroke="#616161" stroke-width="1.3"/><rect x="2.3" y="4.6" width="13" height="8.5" fill="#fff" stroke="#3A96DD" stroke-width="1.3"/><path d="M8.8 1.7 V4.6 M8.8 13.1 V16" stroke="#616161" stroke-width="1.2"/><path d="M4.6 8.9 H13 M6.4 7.1 L4.6 8.9 L6.4 10.7 M11.2 7.1 L13 8.9 L11.2 10.7" stroke="#3A96DD" stroke-width="1.2"/></svg>
<div style="position:absolute;left:429.00px;top:145.19px;font:400 10.6px/1 'Liberation Sans', sans-serif;color:#605E5C;white-space:nowrap;transform:scaleX(0.898);transform-origin:left 0;">Alignment</div>
<div style="position:absolute;left:600.00px;top:42.60px;width:178.30px;height:25.80px;background:#fff;border:1px solid #E1DFDD;border-radius:4px;box-sizing:border-box"></div>
<svg style="position:absolute;left:697.00px;top:45.00px;overflow:visible;" width="16" height="18" viewBox="0 0 16 18" fill="none"><path d="M2.2 16.6 L2.9 13.4 L11.2 3.3 C12 2.3, 13.5 2.4, 14.2 3.2 C14.9 4, 14.8 5.2, 14.1 6 L5.6 15.9 Z M10.3 4.4 L13.2 6.9" stroke="#107C41" stroke-width="1.25" stroke-linejoin="round"/></svg>
<div style="position:absolute;left:714.00px;top:49.44px;font:400 13.6px/1 'Liberation Sans', sans-serif;color:#107C41;white-space:nowrap;transform:scaleX(0.99);transform-origin:left 0;-webkit-text-stroke:0.3px #107C41">Editing</div>
<svg style="position:absolute;left:761.65px;top:52.80px;overflow:visible;" width="9.3" height="5" viewBox="0 0 9.3 5" fill="none"><path d="M0.5 0.5 L4.65 4.5 L8.8 0.5" stroke="#107C41" stroke-width="1.4"/></svg>
<div style="position:absolute;left:999.00px;top:42.20px;width:83.00px;height:26.40px;background:#107C41;border-radius:3px"></div>
<svg style="position:absolute;left:1004.00px;top:45.00px;overflow:visible;" width="20" height="20" viewBox="0 0 20 20" fill="none"><path d="M9 5.6 H3.2 V17.2 H15.6 V12.6" stroke="#fff" stroke-width="1.3" stroke-linejoin="round"/><path d="M7 14 C7.5 9, 10.5 7.3, 15 7.3 M12.6 4.3 L15.8 7.3 L12.6 10.3" stroke="#fff" stroke-width="1.3" stroke-linejoin="round"/></svg>
<div style="position:absolute;left:1025.50px;top:49.74px;font:400 13.6px/1 'Liberation Sans', sans-serif;color:#fff;white-space:nowrap;transform:scaleX(0.915);transform-origin:left 0;-webkit-text-stroke:0.3px #fff">Share</div>
<svg style="position:absolute;left:1065.55px;top:53.50px;overflow:visible;" width="9.3" height="5" viewBox="0 0 9.3 5" fill="none"><path d="M0.5 0.5 L4.65 4.5 L8.8 0.5" stroke="#fff" stroke-width="1.4"/></svg>
<div style="position:absolute;left:1089.60px;top:42.20px;width:90.00px;height:26.40px;background:#fff;border:1px solid #E1DFDD;border-radius:4px;box-sizing:border-box"></div>
<svg style="position:absolute;left:1098.00px;top:47.00px;overflow:visible;" width="16" height="16" viewBox="0 0 16 16" fill="none"><path d="M1.3 1.6 H14.3 V10.5 H6.6 L3.2 13.9 V10.5 H1.3 Z" stroke="#107C41" stroke-width="1.3" stroke-linejoin="round"/></svg>
<div style="position:absolute;left:1117.30px;top:49.74px;font:400 13.6px/1 'Liberation Sans', sans-serif;color:#107C41;white-space:nowrap;transform:scaleX(0.93);transform-origin:left 0;-webkit-text-stroke:0.3px #107C41">Comments</div>
<svg style="position:absolute;left:719.00px;top:80.00px;overflow:visible;" width="30" height="24" viewBox="0 0 30 24" fill="none"><rect x="1.5" y="1.0999999999999943" width="26.399999999999977" height="20.700000000000003" fill="#fff" stroke="#616161" stroke-width="1.15"/><path d="M6 1.0999999999999943 V21.799999999999997" stroke="#616161" stroke-width="1.15"/><path d="M18.399999999999977 1.0999999999999943 V21.799999999999997" stroke="#616161" stroke-width="1.15"/><path d="M22.799999999999955 1.0999999999999943 V21.799999999999997" stroke="#616161" stroke-width="1.15"/><path d="M1.5 8.099999999999994 H27.899999999999977" stroke="#616161" stroke-width="1.15"/><path d="M1.5 14.700000000000003 H27.899999999999977" stroke="#616161" stroke-width="1.15"/><rect x="6" y="1.1" width="12.4" height="7" fill="#F4A3AA" stroke="#D9535F" stroke-width="1"/><rect x="6" y="14.7" width="14.3" height="7.1" fill="#F4A3AA" stroke="#D9535F" stroke-width="1"/><rect x="6" y="8.6" width="8" height="5.6" fill="#8CC4F0" stroke="#3A96DD" stroke-width="1"/></svg>
<div style="position:absolute;left:433.30px;width:600px;text-align:center;top:109.67px;font:400 12.5px/1 'Liberation Sans', sans-serif;color:#605E5C;white-space:nowrap;transform:scaleX(0.905);transform-origin:center 0;">Conditional</div>
<div style="position:absolute;left:428.80px;width:600px;text-align:center;top:124.68px;font:400 12.5px/1 'Liberation Sans', sans-serif;color:#605E5C;white-space:nowrap;transform:scaleX(0.905);transform-origin:center 0;">Formatting</div>
<svg style="position:absolute;left:757.80px;top:129.50px;overflow:visible;" width="6" height="3.4" viewBox="0 0 6 3.4" fill="none"><path d="M0.5 0.5 L3.0 2.9 L5.5 0.5" stroke="#605E5C" stroke-width="1.1"/></svg>
<svg style="position:absolute;left:780.00px;top:80.00px;overflow:visible;" width="36" height="30" viewBox="0 0 36 30" fill="none"><rect x="2.1000000000000227" y="1.0999999999999943" width="26.399999999999977" height="20.700000000000003" fill="#fff" stroke="#616161" stroke-width="1.15"/><path d="M11.600000000000023 1.0999999999999943 V21.799999999999997" stroke="#616161" stroke-width="1.15"/><path d="M19.700000000000045 1.0999999999999943 V21.799999999999997" stroke="#616161" stroke-width="1.15"/><path d="M2.1000000000000227 7.799999999999997 H28.5" stroke="#616161" stroke-width="1.15"/><path d="M2.1000000000000227 14.799999999999997 H28.5" stroke="#616161" stroke-width="1.15"/><rect x="11.6" y="7.8" width="16.9" height="14" fill="#8CC4F0"/><path d="M11.6 7.8 H28.5 V21.8 H11.6 Z M19.7 7.8 V21.8 M11.6 14.8 H28.5" stroke="#3A96DD" stroke-width="1.1"/><path d="M29.5 8.5 L17.2 20.5" stroke="#616161" stroke-width="3.2" stroke-linecap="round"/><path d="M29.5 8.5 L17.2 20.5" stroke="#fff" stroke-width="1.4" stroke-linecap="round"/><path d="M17.6 19.5 C15.5 19, 13.5 21, 12.4 25 C16 25.5, 19 23.5, 18.8 21 Z" fill="#3A96DD" stroke="#2B79C2" stroke-width="0.8"/></svg>
<div style="position:absolute;left:495.20px;width:600px;text-align:center;top:109.67px;font:400 12.5px/1 'Liberation Sans', sans-serif;color:#605E5C;white-space:nowrap;transform:scaleX(0.89);transform-origin:center 0;">Format As</div>
<div style="position:absolute;left:489.50px;width:600px;text-align:center;top:124.68px;font:400 12.5px/1 'Liberation Sans', sans-serif;color:#605E5C;white-space:nowrap;transform:scaleX(0.905);transform-origin:center 0;">Table</div>
<svg style="position:absolute;left:803.50px;top:129.50px;overflow:visible;" width="6" height="3.4" viewBox="0 0 6 3.4" fill="none"><path d="M0.5 0.5 L3.0 2.9 L5.5 0.5" stroke="#605E5C" stroke-width="1.1"/></svg>
<svg style="position:absolute;left:826.00px;top:80.00px;overflow:visible;" width="36" height="30" viewBox="0 0 36 30" fill="none"><rect x="2.2999999999999545" y="1.0999999999999943" width="25.700000000000045" height="20.700000000000003" fill="#fff" stroke="#616161" stroke-width="1.15"/><path d="M6.7000000000000455 1.0999999999999943 V21.799999999999997" stroke="#616161" stroke-width="1.15"/><path d="M23.600000000000023 1.0999999999999943 V21.799999999999997" stroke="#616161" stroke-width="1.15"/><path d="M2.2999999999999545 3 H28" stroke="#616161" stroke-width="1.15"/><path d="M2.2999999999999545 16.200000000000003 H28" stroke="#616161" stroke-width="1.15"/><rect x="6.7" y="3" width="16.9" height="13.2" fill="#8CC4F0" stroke="#3A96DD" stroke-width="1.1"/><path d="M29.5 8.5 L17.2 20.5" stroke="#616161" stroke-width="3.2" stroke-linecap="round"/><path d="M29.5 8.5 L17.2 20.5" stroke="#fff" stroke-width="1.4" stroke-linecap="round"/><path d="M17.6 19.5 C15.5 19, 13.5 21, 12.4 25 C16 25.5, 19 23.5, 18.8 21 Z" fill="#3A96DD" stroke="#2B79C2" stroke-width="0.8"/></svg>
<div style="position:absolute;left:540.80px;width:600px;text-align:center;top:109.67px;font:400 12.5px/1 'Liberation Sans', sans-serif;color:#605E5C;white-space:nowrap;transform:scaleX(0.9);transform-origin:center 0;">Styles</div>
<svg style="position:absolute;left:837.50px;top:129.50px;overflow:visible;" width="6" height="3.4" viewBox="0 0 6 3.4" fill="none"><path d="M0.5 0.5 L3.0 2.9 L5.5 0.5" stroke="#605E5C" stroke-width="1.1"/></svg>
<div style="position:absolute;left:479.40px;width:600px;text-align:center;top:145.19px;font:400 10.6px/1 'Liberation Sans', sans-serif;color:#605E5C;white-space:nowrap;transform:scaleX(0.913);transform-origin:center 0;">Styles</div>
<svg style="position:absolute;left:876.00px;top:78.00px;overflow:visible;" width="36" height="28" viewBox="0 0 36 28" fill="none"><rect x="4.899999999999977" y="3.200000000000003" width="26.100000000000023" height="20.599999999999994" fill="#fff" stroke="#616161" stroke-width="1.15"/><path d="M14.200000000000045 3.200000000000003 V23.799999999999997" stroke="#616161" stroke-width="1.15"/><path d="M22.700000000000045 3.200000000000003 V23.799999999999997" stroke="#616161" stroke-width="1.15"/><path d="M4.899999999999977 10.299999999999997 H31" stroke="#616161" stroke-width="1.15"/><path d="M4.899999999999977 16.799999999999997 H31" stroke="#616161" stroke-width="1.15"/><rect x="14.2" y="10.3" width="18.6" height="6.5" fill="#8CC4F0" stroke="#3A96DD" stroke-width="1.1"/><path d="M22.7 10.3 V16.8" stroke="#3A96DD" stroke-width="1.1"/><path d="M14.6 13.5 H4.8 M8.4 9.8 L4.5 13.5 L8.4 17.2" stroke="#F3F2F1" stroke-width="3"/><path d="M14.6 13.5 H4.8 M8.4 9.8 L4.5 13.5 L8.4 17.2" stroke="#3A96DD" stroke-width="1.2"/></svg>
<svg style="position:absolute;left:915.00px;top:78.00px;overflow:visible;" width="36" height="28" viewBox="0 0 36 28" fill="none"><rect x="3.1000000000000227" y="3.200000000000003" width="26.100000000000023" height="20.599999999999994" fill="#fff" stroke="#616161" stroke-width="1.15"/><path d="M12.399999999999977 3.200000000000003 V23.799999999999997" stroke="#616161" stroke-width="1.15"/><path d="M20.899999999999977 3.200000000000003 V23.799999999999997" stroke="#616161" stroke-width="1.15"/><path d="M3.1000000000000227 10.299999999999997 H29.200000000000045" stroke="#616161" stroke-width="1.15"/><path d="M3.1000000000000227 16.799999999999997 H29.200000000000045" stroke="#616161" stroke-width="1.15"/><path d="M7.3 10.3 H19.5 L21.8 13.5 L19.5 16.8 H7.3 Z M15.2 10.3 V16.8" fill="#8CC4F0" stroke="#3A96DD" stroke-width="1.1"/><path d="M20.5 8.8 L30 19 M30 8.8 L20.5 19" stroke="#F3F2F1" stroke-width="3"/><path d="M20.5 8.8 L30 19 M30 8.8 L20.5 19" stroke="#E8515C" stroke-width="1.2"/></svg>
<svg style="position:absolute;left:953.00px;top:74.00px;overflow:visible;" width="36" height="30" viewBox="0 0 36 30" fill="none"><rect x="3.2000000000000455" y="7.200000000000003" width="25.899999999999977" height="20.599999999999994" fill="#fff" stroke="#616161" stroke-width="1.15"/><path d="M10.200000000000045 7.200000000000003 V27.799999999999997" stroke="#616161" stroke-width="1.15"/><path d="M22.600000000000023 7.200000000000003 V27.799999999999997" stroke="#616161" stroke-width="1.15"/><path d="M3.2000000000000455 14.299999999999997 H29.100000000000023" stroke="#616161" stroke-width="1.15"/><path d="M3.2000000000000455 20.799999999999997 H29.100000000000023" stroke="#616161" stroke-width="1.15"/><rect x="10.2" y="14.3" width="12.4" height="6.5" fill="#8CC4F0" stroke="#3A96DD" stroke-width="1.1"/><path d="M9.5 3.8 H23.5 M9.5 2 V5.6 M23.5 2 V5.6" stroke="#3A96DD" stroke-width="1.1"/></svg>
<div style="position:absolute;left:593.60px;width:600px;text-align:center;top:109.67px;font:400 12.5px/1 'Liberation Sans', sans-serif;color:#605E5C;white-space:nowrap;transform:scaleX(0.89);transform-origin:center 0;">Insert</div>
<svg style="position:absolute;left:890.60px;top:130.50px;overflow:visible;" width="6" height="3.4" viewBox="0 0 6 3.4" fill="none"><path d="M0.5 0.5 L3.0 2.9 L5.5 0.5" stroke="#605E5C" stroke-width="1.1"/></svg>
<div style="position:absolute;left:631.20px;width:600px;text-align:center;top:109.67px;font:400 12.5px/1 'Liberation Sans', sans-serif;color:#605E5C;white-space:nowrap;transform:scaleX(0.89);transform-origin:center 0;">Delete</div>
<svg style="position:absolute;left:928.20px;top:130.50px;overflow:visible;" width="6" height="3.4" viewBox="0 0 6 3.4" fill="none"><path d="M0.5 0.5 L3.0 2.9 L5.5 0.5" stroke="#605E5C" stroke-width="1.1"/></svg>
<div style="position:absolute;left:669.20px;width:600px;text-align:center;top:109.67px;font:400 12.5px/1 'Liberation Sans', sans-serif;color:#605E5C;white-space:nowrap;transform:scaleX(0.85);transform-origin:center 0;">Format</div>
<svg style="position:absolute;left:966.20px;top:130.50px;overflow:visible;" width="6" height="3.4" viewBox="0 0 6 3.4" fill="none"><path d="M0.5 0.5 L3.0 2.9 L5.5 0.5" stroke="#605E5C" stroke-width="1.1"/></svg>
<div style="position:absolute;left:632.00px;width:600px;text-align:center;top:145.19px;font:400 10.6px/1 'Liberation Sans', sans-serif;color:#605E5C;white-space:nowrap;transform:scaleX(0.913);transform-origin:center 0;">Cells</div>
<svg style="position:absolute;left:1010.00px;top:76.00px;overflow:visible;" width="32" height="32" viewBox="0 0 32 32" fill="none"><circle cx="20.7" cy="11.9" r="9" fill="#fff" stroke="#616161" stroke-width="1.2"/><path d="M14.3 18.4 L3.5 29.5" stroke="#616161" stroke-width="1.3"/></svg>
<div style="position:absolute;left:726.80px;width:600px;text-align:center;top:109.67px;font:400 12.5px/1 'Liberation Sans', sans-serif;color:#605E5C;white-space:nowrap;transform:scaleX(0.88);transform-origin:center 0;">Editing</div>
<svg style="position:absolute;left:1023.80px;top:130.50px;overflow:visible;" width="6" height="3.4" viewBox="0 0 6 3.4" fill="none"><path d="M0.5 0.5 L3.0 2.9 L5.5 0.5" stroke="#605E5C" stroke-width="1.1"/></svg>
<div style="position:absolute;left:454px;top:1px;width:245px;height:491px;background:#fff;box-shadow:0 3px 7px rgba(0,0,0,0.2),0 0 2px rgba(0,0,0,0.12);border-radius:2px"></div>
<div style="position:absolute;left:466.00px;top:12.20px;width:220.00px;height:27.00px;background:#fff;border:1px solid #DCDAD8;border-radius:4px;box-sizing:border-box"></div>
<div style="position:absolute;left:473.60px;top:20.14px;font:400 13.6px/1 'Liberation Sans', sans-serif;color:#767676;white-space:nowrap;transform:scaleX(0.9);transform-origin:left 0;">Search the menus</div>
<svg style="position:absolute;left:464.00px;top:49.00px;overflow:visible;" width="20" height="20" viewBox="0 0 20 20" fill="none"><path d="M6.6 2 L12.9 13.6 M12.6 2 L6.3 13.6" stroke="#616161" stroke-width="1.05"/><circle cx="5.5" cy="15.3" r="2" stroke="#3A96DD" stroke-width="1.2" fill="#fff"/><circle cx="13.7" cy="15.3" r="2" stroke="#3A96DD" stroke-width="1.2" fill="#fff"/></svg>
<div style="position:absolute;left:492.00px;top:52.64px;font:400 13.6px/1 'Liberation Sans', sans-serif;color:#323130;white-space:nowrap;transform:scaleX(0.9);transform-origin:left 0;">Cut</div>
<div style="position:absolute;left:454.00px;top:73.50px;width:245.00px;height:33.50px;background:#F3F2F1"></div>
<div style="position:absolute;left:453.50px;top:72.80px;width:246.50px;height:35.30px;border:3px solid #E81A26;box-sizing:border-box"></div>
<svg style="position:absolute;left:462.00px;top:78.00px;overflow:visible;" width="24" height="22" viewBox="0 0 24 22" fill="none"><g stroke="#616161" stroke-width="1.15" stroke-linejoin="round"><path d="M9.2 16.4 H3 V3 H9 L10.1 4.3"/><path d="M9.8 6 H16.4 L20 9.6 V18.6 H9.8 Z" fill="#F3F2F1"/><path d="M16.2 6 V9.8 H20"/><path d="M12.5 13.1 H17.3 M12.5 15.6 H17.3"/></g></svg>
<div style="position:absolute;left:492.00px;top:82.94px;font:400 13.6px/1 'Liberation Sans', sans-serif;color:#323130;white-space:nowrap;transform:scaleX(0.9);transform-origin:left 0;">Copy</div>
<div style="position:absolute;left:466.30px;top:115.04px;font:400 13.6px/1 'Liberation Sans', sans-serif;color:#201F1E;white-space:nowrap;transform:scaleX(0.942);transform-origin:left 0;-webkit-text-stroke:0.3px #201F1E">Paste Options</div>
<svg style="position:absolute;left:466.00px;top:144.40px;overflow:visible;" width="24" height="26" viewBox="0 0 24 26" fill="none"><rect x="1.2" y="4.8" width="16.2" height="19.3" fill="#F8F8F8"/><path d="M6 4.8 H1.2 V24.1 H8" stroke="#ED9A2B" stroke-width="1.8"/><path d="M13 4.8 H17.4 V10" stroke="#ED9A2B" stroke-width="1.8"/><path d="M4.4 7 V4 H7.3 C7.3 0.8, 11.7 0.8, 11.7 4 H14.6 V7 Z" fill="#fff" stroke="#616161" stroke-width="1.2" stroke-linejoin="round"/><rect x="11.3" y="11" width="10.6" height="13.4" fill="#fff" stroke="#616161" stroke-width="1.4"/></svg>
<svg style="position:absolute;left:503.30px;top:144.40px;overflow:visible;" width="24" height="26" viewBox="0 0 24 26" fill="none"><rect x="1.2" y="4.8" width="16.2" height="19.3" fill="#F8F8F8"/><path d="M6 4.8 H1.2 V24.1 H8" stroke="#ED9A2B" stroke-width="1.8"/><path d="M13 4.8 H17.4 V10" stroke="#ED9A2B" stroke-width="1.8"/><path d="M4.4 7 V4 H7.3 C7.3 0.8, 11.7 0.8, 11.7 4 H14.6 V7 Z" fill="#fff" stroke="#616161" stroke-width="1.2" stroke-linejoin="round"/><rect x="8" y="14" width="15" height="11" fill="#fff"/><text x="6.3" y="24.6" font-family="Liberation Sans" font-size="10" fill="#616161" textLength="16" lengthAdjust="spacingAndGlyphs">123</text></svg>
<svg style="position:absolute;left:540.50px;top:144.40px;overflow:visible;" width="24" height="26" viewBox="0 0 24 26" fill="none"><rect x="1.2" y="4.8" width="16.2" height="19.3" fill="#F8F8F8"/><path d="M6 4.8 H1.2 V24.1 H8" stroke="#ED9A2B" stroke-width="1.8"/><path d="M13 4.8 H17.4 V10" stroke="#ED9A2B" stroke-width="1.8"/><path d="M4.4 7 V4 H7.3 C7.3 0.8, 11.7 0.8, 11.7 4 H14.6 V7 Z" fill="#fff" stroke="#616161" stroke-width="1.2" stroke-linejoin="round"/><rect x="10" y="11" width="13" height="14" fill="#fff"/><text x="8.6" y="21.5" font-family="Liberation Serif" font-style="italic" font-size="14" fill="#616161">fx</text></svg>
<svg style="position:absolute;left:577.80px;top:144.40px;overflow:visible;" width="24" height="26" viewBox="0 0 24 26" fill="none"><rect x="1.2" y="4.8" width="16.2" height="19.3" fill="#F8F8F8"/><path d="M6 4.8 H1.2 V24.1 H8" stroke="#ED9A2B" stroke-width="1.8"/><path d="M13 4.8 H17.4 V10" stroke="#ED9A2B" stroke-width="1.8"/><path d="M4.4 7 V4 H7.3 C7.3 0.8, 11.7 0.8, 11.7 4 H14.6 V7 Z" fill="#fff" stroke="#616161" stroke-width="1.2" stroke-linejoin="round"/><rect x="13" y="11" width="10" height="14" fill="#fff"/><path d="M10 16 H20.5 M17.8 13.3 L20.5 16 L17.8 18.7 M10.5 16 V24 M7.8 21.3 L10.5 24 L13.2 21.3" stroke="#3A96DD" stroke-width="1.3"/></svg>
<svg style="position:absolute;left:615.00px;top:144.40px;overflow:visible;" width="24" height="26" viewBox="0 0 24 26" fill="none"><rect x="1.2" y="4.8" width="16.2" height="19.3" fill="#F8F8F8"/><path d="M6 4.8 H1.2 V24.1 H8" stroke="#ED9A2B" stroke-width="1.8"/><path d="M13 4.8 H17.4 V10" stroke="#ED9A2B" stroke-width="1.8"/><path d="M4.4 7 V4 H7.3 C7.3 0.8, 11.7 0.8, 11.7 4 H14.6 V7 Z" fill="#fff" stroke="#616161" stroke-width="1.2" stroke-linejoin="round"/><text x="4.6" y="15" font-family="Liberation Sans" font-size="9" fill="#3A96DD">%</text><path d="M21.5 9 L10.5 19.5" stroke="#616161" stroke-width="3.2" stroke-linecap="round"/><path d="M21.5 9 L10.5 19.5" stroke="#fff" stroke-width="1.4" stroke-linecap="round"/><path d="M10.8 18.5 C8.5 18, 6 21, 4 25 C8.5 25.5, 12 23.5, 12.2 20 Z" fill="#3A96DD" stroke="#2B79C2" stroke-width="0.8"/></svg>
<svg style="position:absolute;left:652.30px;top:144.40px;overflow:visible;" width="24" height="26" viewBox="0 0 24 26" fill="none"><rect x="1.2" y="4.8" width="16.2" height="19.3" fill="#F8F8F8"/><path d="M6 4.8 H1.2 V24.1 H8" stroke="#ED9A2B" stroke-width="1.8"/><path d="M13 4.8 H17.4 V10" stroke="#ED9A2B" stroke-width="1.8"/><path d="M4.4 7 V4 H7.3 C7.3 0.8, 11.7 0.8, 11.7 4 H14.6 V7 Z" fill="#fff" stroke="#616161" stroke-width="1.2" stroke-linejoin="round"/><rect x="8" y="15" width="16" height="10" fill="#fff"/><rect x="8" y="15.3" width="9" height="6" rx="3" stroke="#3A96DD" stroke-width="1.3"/><rect x="13.5" y="18.6" width="9" height="6" rx="3" stroke="#3A96DD" stroke-width="1.3"/></svg>
<div style="position:absolute;left:461.90px;top:178.90px;width:228.30px;height:1.00px;background:#D2D0CE"></div>
<div style="position:absolute;left:492.20px;top:189.74px;font:400 13.6px/1 'Liberation Sans', sans-serif;color:#323130;white-space:nowrap;transform:scaleX(0.935);transform-origin:left 0;">Insert</div>
<svg style="position:absolute;left:675.50px;top:189.10px;overflow:visible;" width="9" height="13" viewBox="0 0 9 13" fill="none"><path d="M1.2 0.8 L6.8 6.3 L1.2 11.8" stroke="#616161" stroke-width="1.2"/></svg>
<div style="position:absolute;left:492.20px;top:219.64px;font:400 13.6px/1 'Liberation Sans', sans-serif;color:#323130;white-space:nowrap;transform:scaleX(0.935);transform-origin:left 0;">Delete</div>
<svg style="position:absolute;left:675.50px;top:219.00px;overflow:visible;" width="9" height="13" viewBox="0 0 9 13" fill="none"><path d="M1.2 0.8 L6.8 6.3 L1.2 11.8" stroke="#616161" stroke-width="1.2"/></svg>
<div style="position:absolute;left:492.20px;top:249.74px;font:400 13.6px/1 'Liberation Sans', sans-serif;color:#323130;white-space:nowrap;transform:scaleX(0.935);transform-origin:left 0;">Clear Contents</div>
<div style="position:absolute;left:492.20px;top:279.14px;font:400 13.6px/1 'Liberation Sans', sans-serif;color:#323130;white-space:nowrap;transform:scaleX(0.935);transform-origin:left 0;">Sort</div>
<svg style="position:absolute;left:675.50px;top:278.50px;overflow:visible;" width="9" height="13" viewBox="0 0 9 13" fill="none"><path d="M1.2 0.8 L6.8 6.3 L1.2 11.8" stroke="#616161" stroke-width="1.2"/></svg>
<div style="position:absolute;left:461.90px;top:300.80px;width:228.30px;height:1.00px;background:#D2D0CE"></div>
<svg style="position:absolute;left:462.00px;top:308.00px;overflow:visible;" width="22" height="20" viewBox="0 0 22 20" fill="none"><path d="M7.6 2.3 H19.7 V13.3 H9.5 L5.8 16.8 V13.3 H2.3 V8.4" stroke="#616161" stroke-width="1.2" stroke-linejoin="round"/><path d="M5.7 1.5 V8.8 M2 5.2 H9.4" stroke="#F3F2F1" stroke-width="3"/><path d="M5.7 1.5 V8.8 M2 5.2 H9.4" stroke="#13A10E" stroke-width="1.2"/></svg>
<div style="position:absolute;left:492.20px;top:312.44px;font:400 13.6px/1 'Liberation Sans', sans-serif;color:#323130;white-space:nowrap;transform:scaleX(0.955);transform-origin:left 0;">New Comment</div>
<svg style="position:absolute;left:462.00px;top:338.00px;overflow:visible;" width="22" height="20" viewBox="0 0 22 20" fill="none"><path d="M7.6 2.5 H18.8 V11.6 L14 16.7 H3.5 V8.4" stroke="#616161" stroke-width="1.2" stroke-linejoin="round"/><path d="M18.8 11.6 H14 V16.7" stroke="#616161" stroke-width="1.1"/><path d="M5.7 1.5 V8.8 M2 5.2 H9.4" stroke="#fff" stroke-width="3"/><path d="M5.7 1.5 V8.8 M2 5.2 H9.4" stroke="#13A10E" stroke-width="1.2"/></svg>
<div style="position:absolute;left:492.20px;top:341.94px;font:400 13.6px/1 'Liberation Sans', sans-serif;color:#323130;white-space:nowrap;transform:scaleX(0.975);transform-origin:left 0;">New Note</div>
<div style="position:absolute;left:461.90px;top:363.70px;width:228.30px;height:1.00px;background:#D2D0CE"></div>
<svg style="position:absolute;left:462.00px;top:369.00px;overflow:visible;" width="22" height="22" viewBox="0 0 22 22" fill="none"><path d="M5.6 9.6 A5 5 0 1 1 14.6 9.6" stroke="#3A96DD" stroke-width="1.2"/><path d="M9.6 5 V8.4 H12.4" stroke="#616161" stroke-width="1.1"/><text x="5.3" y="19.8" font-family="Liberation Sans" font-size="10" fill="#616161" textLength="14.7" lengthAdjust="spacingAndGlyphs">123</text></svg>
<div style="position:absolute;left:492.20px;top:374.94px;font:400 13.6px/1 'Liberation Sans', sans-serif;color:#323130;white-space:nowrap;transform:scaleX(0.938);transform-origin:left 0;">Number Format...</div>
<svg style="position:absolute;left:462.00px;top:403.00px;overflow:visible;" width="22" height="16" viewBox="0 0 22 16" fill="none"><rect x="3" y="3.3" width="10.2" height="6.8" rx="3.4" stroke="#616161" stroke-width="1.2"/><rect x="8.4" y="5.6" width="11" height="7.2" rx="3.6" stroke="#616161" stroke-width="1.2"/></svg>
<div style="position:absolute;left:492.20px;top:404.54px;font:400 13.6px/1 'Liberation Sans', sans-serif;color:#323130;white-space:nowrap;transform:scaleX(0.926);transform-origin:left 0;">Hyperlink...</div>
<svg style="position:absolute;left:462.00px;top:430.00px;overflow:visible;" width="24" height="22" viewBox="0 0 24 22" fill="none"><rect x="2.6999999999999886" y="2.1999999999999886" width="17.0" height="16.5" fill="#fff" stroke="#616161" stroke-width="1.1"/><path d="M8.199999999999989 2.1999999999999886 V18.69999999999999" stroke="#616161" stroke-width="1.1"/><path d="M14.199999999999989 2.1999999999999886 V18.69999999999999" stroke="#616161" stroke-width="1.1"/><path d="M2.6999999999999886 7.699999999999989 H19.69999999999999" stroke="#616161" stroke-width="1.1"/><path d="M2.6999999999999886 13.199999999999989 H19.69999999999999" stroke="#616161" stroke-width="1.1"/><rect x="8.5" y="10" width="13" height="10" fill="#fff"/><rect x="8.8" y="11.2" width="8" height="5.2" rx="2.6" stroke="#3A96DD" stroke-width="1.2"/><rect x="12.8" y="13.8" width="8" height="5.2" rx="2.6" stroke="#3A96DD" stroke-width="1.2"/></svg>
<div style="position:absolute;left:492.20px;top:435.04px;font:400 13.6px/1 'Liberation Sans', sans-serif;color:#323130;white-space:nowrap;transform:scaleX(0.959);transform-origin:left 0;">Copy link to this range</div>
<div style="position:absolute;left:461.90px;top:456.20px;width:228.30px;height:1.00px;background:#D2D0CE"></div>
<svg style="position:absolute;left:462.00px;top:463.00px;overflow:visible;" width="24" height="22" viewBox="0 0 24 22" fill="none"><rect x="2.6999999999999886" y="2.1999999999999886" width="17.0" height="14.300000000000011" fill="#fff" stroke="#616161" stroke-width="1.1"/><path d="M6.300000000000011 2.1999999999999886 V16.5" stroke="#616161" stroke-width="1.1"/><path d="M13.399999999999977 2.1999999999999886 V16.5" stroke="#616161" stroke-width="1.1"/><path d="M2.6999999999999886 6.100000000000023 H19.69999999999999" stroke="#616161" stroke-width="1.1"/><path d="M2.6999999999999886 9.699999999999989 H19.69999999999999" stroke="#616161" stroke-width="1.1"/><path d="M2.6999999999999886 13.199999999999989 H19.69999999999999" stroke="#616161" stroke-width="1.1"/><rect x="9" y="6" width="15" height="16" fill="#fff"/><path d="M9.6 12.5 A5.2 5.2 0 1 0 11.5 7.6" stroke="#3A96DD" stroke-width="1.3"/><path d="M9.2 6.6 L11.7 7.6 L10.3 10" stroke="#3A96DD" stroke-width="1.2"/><path d="M15 8.6 V11.4 L17 13" stroke="#3A96DD" stroke-width="1.1"/></svg>
<div style="position:absolute;left:492.20px;top:467.44px;font:400 13.6px/1 'Liberation Sans', sans-serif;color:#323130;white-space:nowrap;transform:scaleX(0.911);transform-origin:left 0;">Show Changes</div>
<div style="position:absolute;left:6.60px;top:166.59px;font:400 12.6px/1 'Liberation Sans', sans-serif;color:#444;white-space:nowrap;transform:scaleX(0.93);transform-origin:left 0;">A1</div>
<svg style="position:absolute;left:108.90px;top:170.20px;overflow:visible;" width="5.6" height="3.2" viewBox="0 0 5.6 3.2" fill="none"><path d="M0.5 0.5 L2.8 2.7 L5.1 0.5" stroke="#444" stroke-width="1.2"/></svg>
<svg style="position:absolute;left:127.00px;top:165.00px;overflow:visible;" width="80" height="16" viewBox="0 0 80 16" fill="none"><path d="M2.7 1.9 L13.6 12.8 M13.6 1.9 L2.7 12.8" stroke="#BDBDBD" stroke-width="1.1"/><path d="M27.5 6.9 L32.5 12.3 L42.4 1.9" stroke="#BDBDBD" stroke-width="1.1"/></svg>
<div style="position:absolute;left:184.20px;top:164.28px;font:400 14.5px/1 'Liberation Sans', sans-serif;color:#333;white-space:nowrap;font-family:'Liberation Serif',serif;font-style:italic">fx</div>
<svg style="position:absolute;left:10.00px;top:554.00px;overflow:visible;" width="12" height="14" viewBox="0 0 12 14" fill="none"><path d="M8 1.5 L3 7 L8 12.5" stroke="#C8C6C4" stroke-width="1.1"/></svg>
<svg style="position:absolute;left:40.00px;top:554.00px;overflow:visible;" width="12" height="14" viewBox="0 0 12 14" fill="none"><path d="M3.5 1.5 L8.5 7 L3.5 12.5" stroke="#C8C6C4" stroke-width="1.1"/></svg>
<svg style="position:absolute;left:68.00px;top:556.00px;overflow:visible;" width="14" height="12" viewBox="0 0 14 12" fill="none"><path d="M1.2 1.6 H12.2 M1.2 6 H12.2 M1.2 10.4 H12.2" stroke="#444" stroke-width="1.3"/></svg>
<div style="position:absolute;left:99.80px;top:555.40px;font:400 13.3px/1 'Liberation Sans', sans-serif;color:#323130;white-space:nowrap;transform:scaleX(0.902);transform-origin:left 0;-webkit-text-stroke:0.3px #323130">Sheet1</div>
<div style="position:absolute;left:98.50px;top:576.40px;width:41.50px;height:2.60px;background:#107C41"></div>
<svg style="position:absolute;left:156.90px;top:556.80px;overflow:visible;" width="12" height="12" viewBox="0 0 12 12" fill="none"><path d="M5.5 1 V11 M0.6 6 H10.6" stroke="#555" stroke-width="1.25"/></svg>
<div style="position:absolute;left:0.00px;top:578.20px;width:1160.00px;height:21.80px;background:#fff;border-top:1px solid #E1DFDD;box-sizing:border-box"></div>
<div style="position:absolute;left:0.00px;top:598.50px;width:1160.00px;height:1.50px;background:#D2D0CE"></div>
<div style="position:absolute;left:13.30px;top:584.80px;font:400 12.0px/1 'Liberation Sans', sans-serif;color:#444;white-space:nowrap;transform:scaleX(0.895);transform-origin:left 0;">Select destination and press ENTER or choose Paste</div>
<div style="position:absolute;left:682.90px;top:584.60px;font:400 12.0px/1 'Liberation Sans', sans-serif;color:#444;white-space:nowrap;transform:scaleX(0.895);transform-origin:left 0;">Average: 1776</div>
<div style="position:absolute;left:765.90px;top:584.60px;font:400 12.0px/1 'Liberation Sans', sans-serif;color:#444;white-space:nowrap;transform:scaleX(0.91);transform-origin:left 0;">Count: 35</div>
<div style="position:absolute;left:826.70px;top:584.60px;font:400 12.0px/1 'Liberation Sans', sans-serif;color:#444;white-space:nowrap;transform:scaleX(0.875);transform-origin:left 0;">Sum: 44400</div>
<svg style="position:absolute;left:897.50px;top:588.50px;overflow:visible;" width="7" height="5" viewBox="0 0 7 5" fill="none"><path d="M0.8 0.8 L3.3 3.5 L5.8 0.8" stroke="#444" stroke-width="1.4"/></svg>
<div style="position:absolute;left:943.40px;top:584.60px;font:400 12.0px/1 'Liberation Sans', sans-serif;color:#444;white-space:nowrap;transform:scaleX(0.922);transform-origin:left 0;">Give Feedback to Microsoft</div>
<div style="position:absolute;left:1118.00px;top:589.30px;width:10.10px;height:1.20px;background:#444"></div>
<div style="position:absolute;left:1137.40px;top:584.60px;font:400 12.0px/1 'Liberation Sans', sans-serif;color:#444;white-space:nowrap;transform:scaleX(0.9);transform-origin:left 0;">125%</div>
<div style="position:absolute;left:454px;top:504.6px;width:348.6px;height:65.1px;background:#fff;box-shadow:0 3px 7px rgba(0,0,0,0.18),0 0 2px rgba(0,0,0,0.1);border-radius:0"></div>
<div style="position:absolute;left:457.40px;top:508.20px;width:167.40px;height:26.20px;background:#fff;border:1px solid #C8C6C4;box-sizing:border-box"></div>
<div style="position:absolute;left:576.20px;top:508.20px;width:1.00px;height:26.20px;background:#C8C6C4"></div>
<div style="position:absolute;left:461.50px;top:514.60px;font:400 14.0px/1 'Liberation Sans', sans-serif;color:#444;white-space:nowrap;transform:scaleX(0.93);transform-origin:left 0;">Calibri</div>
<svg style="position:absolute;left:564.60px;top:518.60px;overflow:visible;" width="9.2" height="5.2" viewBox="0 0 9.2 5.2" fill="none"><path d="M0.5 0.5 L4.6 4.7 L8.7 0.5" stroke="#444" stroke-width="1.2"/></svg>
<div style="position:absolute;left:582.00px;top:514.60px;font:400 14.0px/1 'Liberation Sans', sans-serif;color:#444;white-space:nowrap;transform:scaleX(0.93);transform-origin:left 0;">11</div>
<svg style="position:absolute;left:612.80px;top:518.60px;overflow:visible;" width="9.2" height="5.2" viewBox="0 0 9.2 5.2" fill="none"><path d="M0.5 0.5 L4.6 4.7 L8.7 0.5" stroke="#444" stroke-width="1.2"/></svg>
<div style="position:absolute;left:630.40px;top:512.00px;font:400 18.0px/1 'Liberation Sans', sans-serif;color:#444;white-space:nowrap;transform:scaleX(0.92);transform-origin:left 0;">A</div>
<svg style="position:absolute;left:641.50px;top:513.00px;overflow:visible;" width="8" height="5" viewBox="0 0 8 5" fill="none"><path d="M0.8 3.8 L3.8 1 L6.8 3.8" stroke="#3A96DD" stroke-width="1.3"/></svg>
<div style="position:absolute;left:658.80px;top:514.89px;font:400 14.6px/1 'Liberation Sans', sans-serif;color:#444;white-space:nowrap;transform:scaleX(0.95);transform-origin:left 0;">A</div>
<svg style="position:absolute;left:668.30px;top:513.20px;overflow:visible;" width="8" height="5" viewBox="0 0 8 5" fill="none"><path d="M0.8 1 L3.8 3.8 L6.8 1" stroke="#3A96DD" stroke-width="1.3"/></svg>
<div style="position:absolute;left:685.60px;top:512.07px;font:400 18.5px/1 'Liberation Sans', sans-serif;color:#444;white-space:nowrap;transform:scaleX(0.8);transform-origin:left 0;">$</div>
<svg style="position:absolute;left:704.40px;top:518.90px;overflow:visible;" width="9" height="5" viewBox="0 0 9 5" fill="none"><path d="M0.5 0.5 L4.5 4.5 L8.5 0.5" stroke="#444" stroke-width="1.2"/></svg>
<div style="position:absolute;left:724.60px;top:511.82px;font:400 19.5px/1 'Liberation Sans', sans-serif;color:#444;white-space:nowrap;transform:scaleX(0.93);transform-origin:left 0;">%</div>
<svg style="position:absolute;left:753.50px;top:513.50px;overflow:visible;" width="12" height="16" viewBox="0 0 12 16" fill="none"><path d="M4.9 1.3 C7.8 1.3, 9.8 3.4, 9.6 6.6 C9.4 10.5, 6.2 13.5, 2.4 14.8 L1.9 13.6 C4.2 12.6, 5.6 11, 5.9 9.2 C3.5 9.3, 1.9 7.5, 1.9 5.3 C1.9 3, 3.2 1.3, 4.9 1.3 Z" fill="#222"/></svg>
<svg style="position:absolute;left:776.00px;top:512.00px;overflow:visible;" width="20" height="19" viewBox="0 0 20 19" fill="none"><rect x="1.6" y="1.6" width="15.6" height="15.3" stroke="#616161" stroke-width="1.4"/><rect x="2.3" y="4.6" width="14.2" height="9.4" fill="#fff" stroke="#3A96DD" stroke-width="1.3"/><path d="M9.4 1.6 V4.6 M9.4 14 V16.9" stroke="#616161" stroke-width="1.2"/><path d="M5 9.3 H13.8 M6.9 7.4 L5 9.3 L6.9 11.2 M11.9 7.4 L13.8 9.3 L11.9 11.2" stroke="#3A96DD" stroke-width="1.2"/></svg>
<div style="position:absolute;left:465.40px;top:542.47px;font:700 17.8px/1 'Liberation Sans', sans-serif;color:#333;white-space:nowrap;transform:scaleX(0.88);transform-origin:left 0;">B</div>
<div style="position:absolute;left:492.40px;top:540.85px;font:400 19.0px/1 'Liberation Sans', sans-serif;color:#444;white-space:nowrap;font-family:'Liberation Serif',serif;font-style:italic">I</div>
<svg style="position:absolute;left:515.00px;top:542.00px;overflow:visible;" width="19" height="18" viewBox="0 0 19 18" fill="none"><rect x="1.4" y="1.4" width="15" height="15" stroke="#444" stroke-width="1.4"/><path d="M8.9 1.4 V16.4 M1.4 8.9 H16.4" stroke="#444" stroke-width="1.4"/></svg>
<svg style="position:absolute;left:538.80px;top:548.80px;overflow:visible;" width="9" height="5" viewBox="0 0 9 5" fill="none"><path d="M0.5 0.5 L4.5 4.5 L8.5 0.5" stroke="#444" stroke-width="1.2"/></svg>
<svg style="position:absolute;left:555.50px;top:540.00px;overflow:visible;" width="22" height="22" viewBox="0 0 22 22" fill="none"><path d="M4.9 9.8 L10.6 3.9 C11.4 2.8, 12.8 2.8, 13.2 4.1 L13.6 7.8 L15.6 9.2 L10 14.4 Z" stroke="#616161" stroke-width="1.3" stroke-linejoin="round" fill="#fff"/><path d="M15.2 6.6 C17.3 6.4, 18 9.2, 17.5 14" stroke="#2B79C2" stroke-width="2" stroke-linecap="round"/><rect x="1.4" y="15.7" width="18.5" height="5" fill="#FFF200"/></svg>
<svg style="position:absolute;left:579.70px;top:548.80px;overflow:visible;" width="9" height="5" viewBox="0 0 9 5" fill="none"><path d="M0.5 0.5 L4.5 4.5 L8.5 0.5" stroke="#444" stroke-width="1.2"/></svg>
<div style="position:absolute;left:600.60px;top:541.42px;font:400 17.5px/1 'Liberation Sans', sans-serif;color:#444;white-space:nowrap;transform:scaleX(1.0);transform-origin:left 0;">A</div>
<div style="position:absolute;left:598.00px;top:555.80px;width:18.70px;height:5.00px;background:#F00"></div>
<svg style="position:absolute;left:621.00px;top:548.80px;overflow:visible;" width="9" height="5" viewBox="0 0 9 5" fill="none"><path d="M0.5 0.5 L4.5 4.5 L8.5 0.5" stroke="#444" stroke-width="1.2"/></svg>
<svg style="position:absolute;left:636.00px;top:541.70px;overflow:visible;" width="20" height="20" viewBox="0 0 20 20" fill="none"><path d="M1.7 2 H18.9 M1.7 6.8 H18.9 M1.7 11.6 H18.9 M1.7 16.4 H18.9" stroke="#555" stroke-width="1.3"/></svg>
<div style="position:absolute;left:665.50px;top:541.50px;font:400 12.0px/1 'Liberation Sans', sans-serif;color:#616161;white-space:nowrap;transform:scaleX(0.95);transform-origin:left 0;">ab</div>
<div style="position:absolute;left:665.50px;top:550.60px;font:400 12.0px/1 'Liberation Sans', sans-serif;color:#616161;white-space:nowrap;transform:scaleX(0.95);transform-origin:left 0;">c</div>
<svg style="position:absolute;left:671.00px;top:552.00px;overflow:visible;" width="12" height="10" viewBox="0 0 12 10" fill="none"><path d="M9.8 0.8 C10.3 5, 8.8 7, 3.2 7 M5.6 4.6 L3.2 7 L5.6 9.4" stroke="#3A96DD" stroke-width="1.3"/></svg>
<svg style="position:absolute;left:690.00px;top:543.00px;overflow:visible;" width="20" height="18" viewBox="0 0 20 18" fill="none"><path d="M9.2 4.4 H1.8 M4.2 2 L1.8 4.4 L4.2 6.8" stroke="#3A96DD" stroke-width="1.2"/></svg>
<div style="position:absolute;left:698.50px;top:541.42px;font:400 10.8px/1 'Liberation Sans', sans-serif;color:#616161;white-space:nowrap;transform:scaleX(0.9);transform-origin:left 0;">.0</div>
<div style="position:absolute;left:693.00px;top:550.32px;font:400 10.8px/1 'Liberation Sans', sans-serif;color:#616161;white-space:nowrap;transform:scaleX(0.9);transform-origin:left 0;">.00</div>
<div style="position:absolute;left:716.60px;top:541.42px;font:400 10.8px/1 'Liberation Sans', sans-serif;color:#616161;white-space:nowrap;transform:scaleX(0.9);transform-origin:left 0;">.00</div>
<svg style="position:absolute;left:715.00px;top:552.00px;overflow:visible;" width="20" height="18" viewBox="0 0 20 18" fill="none"><path d="M0.8 3.8 H9.8 M7.4 1.4 L9.8 3.8 L7.4 6.2" stroke="#3A96DD" stroke-width="1.2"/></svg>
<div style="position:absolute;left:725.50px;top:550.32px;font:400 10.8px/1 'Liberation Sans', sans-serif;color:#616161;white-space:nowrap;transform:scaleX(0.9);transform-origin:left 0;">.0</div>
<svg style="position:absolute;left:741.00px;top:542.00px;overflow:visible;" width="22" height="20" viewBox="0 0 22 20" fill="none"><path d="M2.3 11 L10.8 17.8 L15.3 12.2 L9.8 7.6 Z" fill="#FBE3C0" stroke="#ED9A2B" stroke-width="1.5" stroke-linejoin="round"/><path d="M3.5 11.8 L12.9 12.3 M6.8 14.4 L11.5 12.8" stroke="#ED9A2B" stroke-width="1.2"/><path d="M10.2 8 L14.5 4 L18.8 8.5 L14.8 12 Z M15.3 4.8 L18.3 2 C19.4 1.3, 20.4 2.6, 19.7 3.4 L17.2 6.5" fill="#fff" stroke="#616161" stroke-width="1.1" stroke-linejoin="round"/></svg></div></body></html>
